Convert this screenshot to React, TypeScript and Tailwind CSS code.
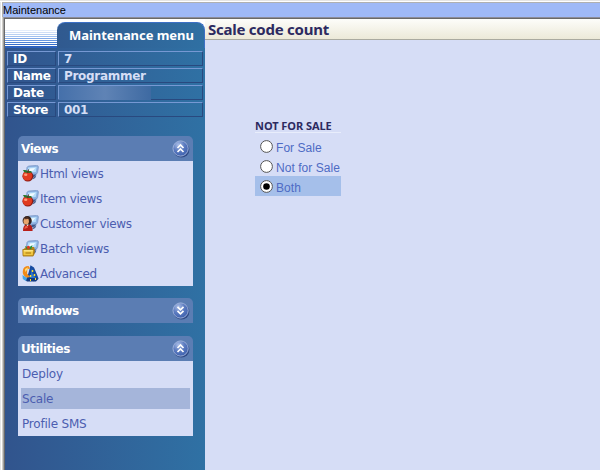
import React from "react";

const verdana = "font-['DejaVu_Sans',Verdana,sans-serif]";

function Chevron({ down = false }: { down?: boolean }) {
  return (
    <svg width="18" height="18" viewBox="0 0 18 18" className="shrink-0">
      <defs>
        <radialGradient id="knob" cx="0.35" cy="0.25" r="0.8">
          <stop offset="0" stopColor="#a9bde6" />
          <stop offset="0.5" stopColor="#5d7cc0" />
          <stop offset="1" stopColor="#3d60ad" />
        </radialGradient>
      </defs>
      <circle cx="9.4" cy="9.6" r="8" fill="#2f4a86" />
      <circle cx="8.6" cy="8.5" r="7.6" fill="url(#knob)" stroke="#a3b5de" strokeWidth="0.9" />
      <path
        d={down ? "M5.5 4.8L8.5 7.8L11.5 4.8M5.5 8.8L8.5 11.8L11.5 8.8" : "M5.5 8L8.5 5L11.5 8M5.5 12L8.5 9L11.5 12"}
        fill="none"
        stroke="#fff"
        strokeWidth="1.7"
      />
    </svg>
  );
}

function Screen() {
  return (
    <g>
      <path d="M8 13L13 11.5L15 8L11 7Z" fill="#3f5a8c" />
      <path d="M5 2.4Q5.5 1.2 7 1L14.6 .4Q16.6 .4 16.4 2.2L15.6 7.5Q15.3 9 13.7 9.2L6 10Q4 9.6 4.2 8Z" fill="#8fb3e2" stroke="#7695c6" strokeWidth=".7" />
      <path d="M6.2 2.6L14.6 1.9L13.7 6.9L5.3 7.8Z" fill="#b6defb" />
      <path d="M8 3.4L13.2 3L11 5.8L7 6.6Z" fill="#f1fbff" />
      <path d="M10.5 13L14.5 10.2L13.2 13L10.5 14.5Z" fill="#47618f" />
    </g>
  );
}

type IconKind = "apple" | "person" | "folder" | "wizard";

function Icon({ kind }: { kind: IconKind }) {
  return (
    <svg width="17" height="17" viewBox="0 0 17 17" className="shrink-0">
      {kind !== "wizard" && <Screen />}
      {kind === "apple" && (
        <g>
          <circle cx="5.9" cy="11.2" r="5.4" fill="#8d1c15" />
          <circle cx="5.4" cy="10.8" r="4.8" fill="#e03a20" />
          <ellipse cx="3.7" cy="9.7" rx="1.7" ry="1.2" fill="#ff9b78" />
          <path d="M.8 5.3Q4 4.5 6 6.5Q9 5 10 7.2Q7 8.5 5.5 7.5Q2.5 8.5 .8 5.3Z" fill="#24762c" />
          <path d="M5.7 8L6.5 4.5" stroke="#4b301d" />
        </g>
      )}
      {kind === "person" && (
        <g>
          <path d="M1 16Q.8 10.5 4.2 9.5H8Q10.8 11 10.6 16Z" fill="#b91f19" />
          <path d="M2.3 14Q2.5 11 4.7 10.5L6 12.5Z" fill="#ee6048" />
          <circle cx="5.2" cy="5.7" r="4.6" fill="#30201d" />
          <ellipse cx="4.2" cy="6.3" rx="2.7" ry="3.2" fill="#e8a56d" />
          <path d="M1.8 4Q5 5 7 3L5 2Z" fill="#563329" />
          <path d="M4.5 9.5L5.5 11.3L6.8 9.6Z" fill="#fff" />
        </g>
      )}
      {kind === "folder" && (
        <g>
          <path d="M1.2 9.5L4 7H12L12.6 9V14L11 16.3H1Z" fill="#b68215" />
          <path d="M3 6L7 7.5L10.5 5L9 10H5Z" fill="#27903b" />
          <circle cx="6.4" cy="7.4" r="1.6" fill="#de3920" />
          <path d="M.8 9.5H12L11.2 15.8H1Z" fill="#f0c63f" stroke="#a37413" strokeWidth=".8" />
          <path d="M2 10.8H10.8" stroke="#fff0a4" />
          <path d="M3.5 13H9" stroke="#a37413" />
        </g>
      )}
      {kind === "wizard" && (
        <g>
          <path d="M8.5 .3L12 2.5L16.5 13.3L12 16.3L4 14.5L6.5 8Z" fill="#164a9f" />
          <path d="M10 3L10.7 9L14 13L8 13.5Z" fill="#2d75ca" />
          <path d="M2 13.8Q8 12.5 16.7 13.6L14 16.5H5Z" fill="#123a80" />
          <path d="M.8 6Q1.3 1 6.5 1L8.2 3.5L5.4 4L5 8.5L8 12L4.5 12.7Q.2 10 .8 6Z" fill="#f18a19" />
          <path d="M3 4L6.2 2.2L5 5L3.3 7Z" fill="#ffe170" />
          <path d="M.5 10L5 13L4 16L.8 14Z" fill="#45a6ea" />
          <path d="M10.5 5v2M9.5 6h2M12.5 9v2M11.5 10h2M8.5 10v2M7.5 11h2M8.5 14v2M13.5 13v2" stroke="#ffe02e" />
        </g>
      )}
    </svg>
  );
}

function PanelHead({ title, down }: { title: string; down?: boolean }) {
  return (
    <div className="flex h-[25px] items-center justify-between rounded-t-[5px] bg-[#5b7db3] pr-[3px] pl-[3px]">
      <span className="pt-px text-[12px] leading-6 font-bold tracking-[-0.45px] text-white">{title}</span>
      <Chevron down={down} />
    </div>
  );
}

const info = [
  ["ID", "7"],
  ["Name", "Programmer"],
  ["Date", ""],
  ["Store", "001"],
];

const views: { label: string; icon: IconKind }[] = [
  { label: "Html views", icon: "apple" },
  { label: "Item views", icon: "apple" },
  { label: "Customer views", icon: "person" },
  { label: "Batch views", icon: "folder" },
  { label: "Advanced", icon: "wizard" },
];

const cell = "h-[15px] border border-t-[#7698d3] border-l-[#7698d3] border-r-[#29497f] border-b-[#29497f] pl-[5px] text-[12px] leading-[14px] font-bold tracking-[-0.3px]";

function Sidebar() {
  return (
    <aside className={`flex w-[200px] shrink-0 flex-col ${verdana}`}>
      <div className="flex h-[29px] bg-white">
        <div className="flex w-[52px] flex-col pt-[11px]">
          <div className="h-px bg-[#e3edfb]" />
          <div className="mt-px h-px bg-[#cfdff7]" />
          <div className="mt-px h-px bg-[#b9d1f3]" />
          <div className="mt-px h-px bg-[#9fc0ef]" />
          <div className="mt-px h-px bg-[#83abe8]" />
          <div className="mt-px h-px bg-[#6796df]" />
          <div className="mt-px h-px bg-[#4d82d5]" />
          <div className="mt-px h-px bg-[#386fcb]" />
          <div className="mt-px h-px bg-[#2c61bd]" />
          <div className="h-px bg-[#2c61bd]" />
        </div>
        <div className="mt-[3px] h-[26px] w-[148px] rounded-t-[8px] border-t border-r border-[#3c70c6] bg-linear-to-r from-[#30598f] to-[#2f70a3] pl-[12px] font-['Noto_Sans','Open_Sans',sans-serif] text-[13px] leading-[25px] font-bold tracking-[-0.05px] whitespace-nowrap text-white">
          Maintenance menu
        </div>
      </div>
      <div className="flex-1 bg-linear-to-r from-[#31548d] to-[#2f71a4] pt-[3px]">
        <div className="flex flex-col gap-[2px] pr-[2px] pl-[2px]">
          {info.map(([key, value]) => (
            <div key={key} className="flex gap-[2px]">
              <div className={`w-[49px] text-white ${cell}`}>{key}</div>
              <div className={`w-[145px] text-[#d5def5] ${cell}`}>
                {value || <div className="-ml-[5px] h-[14px] w-[92px] bg-linear-to-r from-[#4570aa] via-[#5f83b5] to-[#3e6aa2]" />}
              </div>
            </div>
          ))}
        </div>
        <div className="mt-[19px] flex flex-col pr-[12px] pl-[13px]">
          <PanelHead title="Views" />
          <div className="mb-3 bg-[#d6ddf6]">
            {views.map((v) => (
              <div key={v.label} className="flex h-[25px] items-center gap-px pl-1 text-[12px] tracking-[-0.3px] text-[#4c5db0]">
                <Icon kind={v.icon} />
                <span className="pt-px">{v.label}</span>
              </div>
            ))}
          </div>
          <PanelHead title="Windows" down />
          <div className="h-[13px]" />
          <PanelHead title="Utilities" />
          <div className="flex flex-col gap-1 bg-[#d6ddf6] px-[3px] py-[2px] text-[12px] leading-[22px] tracking-[-0.2px] text-[#4c5db0]">
            <div className="h-[21px] pl-px">Deploy</div>
            <div className="h-[21px] bg-[#a5b5da] pl-px">Scale</div>
            <div className="h-[21px] pl-px">Profile SMS</div>
          </div>
        </div>
      </div>
    </aside>
  );
}

function Option({ label, checked = false }: { label: string; checked?: boolean }) {
  return (
    <div className={checked ? "flex h-5 items-center bg-[#a5bfea] pl-[5px]" : "flex h-5 items-center pl-[5px]"}>
      <svg width="13" height="13" viewBox="0 0 13 13">
        <circle cx="6.5" cy="6.5" r="5.9" fill="#fff" stroke="#555" strokeWidth="1" />
        {checked && <circle cx="6.5" cy="6.5" r="3.3" fill="#000" />}
      </svg>
      <span className="pt-[3px] pl-[3px] font-['Liberation_Sans',Arial,sans-serif] text-[12px] leading-4 tracking-[0.05px] whitespace-nowrap text-[#4e6bc4]">
        {label}
      </span>
    </div>
  );
}

export default function App() {
  return (
    <div className="flex h-[470px] w-[600px] flex-col overflow-hidden border-t border-[#e5e5e5] bg-[#d6ddf6]">
      <div className="h-px shrink-0 bg-white" />
      <div className="flex h-[15px] shrink-0">
        <div className="w-px bg-[#e5e5e5]" />
        <div className="w-px bg-white" />
        <div className="flex-1 border-t border-l border-[#b0b0b0] bg-[#9fb9f7] font-['Liberation_Sans',Arial,sans-serif] text-[11px] leading-[14px] text-black">
          Maintenance
        </div>
      </div>
      <div className="flex min-h-0 flex-1">
        <div className="w-px bg-[#e5e5e5]" />
        <div className="w-px bg-white" />
        <div className="w-px bg-[#d0cec8]" />
        <div className="w-px bg-[#a0a0a0]" />
        <div className="flex flex-1 flex-col border-t border-[#8c8c98]">
          <div className="flex flex-1 border-t border-l border-[#696969]">
            <Sidebar />
            <main className="flex-1">
              <h1 className="h-[21px] border-b border-[#aaaaa0] bg-linear-to-b from-[#fdfdfa] to-[#ece9d8] pl-[3px] font-['Noto_Sans','Open_Sans',sans-serif] text-[15px] leading-[21px] font-bold tracking-[-0.25px] text-[#2c2a60]">
                Scale code count
              </h1>
              <div className="mt-[79px] ml-[50px] w-[86px]">
                <div className="mb-[3px] h-[14px] border-b border-[#e8edfb] font-['Noto_Sans','Open_Sans',sans-serif] text-[11px] leading-[14px] font-bold tracking-[-0.05px] whitespace-nowrap text-[#2c2a60]">
                  NOT FOR SALE
                </div>
                <Option label="For Sale" />
                <Option label="Not for Sale" />
                <Option label="Both" checked />
              </div>
            </main>
          </div>
        </div>
      </div>
    </div>
  );
}
